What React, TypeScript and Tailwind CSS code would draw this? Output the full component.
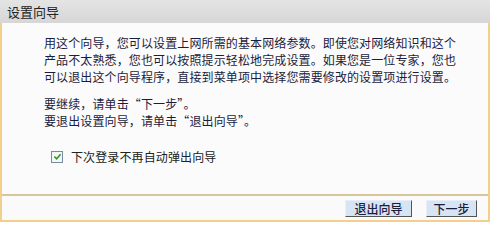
export default function App() {
  const font = { fontFamily: '"Noto Sans CJK SC", "Noto Sans", sans-serif' };
  return (
    <div className="w-[490px] h-[222px] flex flex-col bg-[#fbfbfb] text-[12px] leading-[17px] text-[#1c1c3c]" style={font}>
      <div className="h-[23px] shrink-0 bg-gradient-to-b from-[#e4e4e4] to-[#d6d6d6] pl-[7px] pt-[3px] text-[13px] leading-[17px] text-[#222]">
        设置向导
      </div>
      <div className="flex-1 flex flex-col border-l-2 border-r-2 border-[#f3cf8c]">
        <div className="flex-1 pl-[42px] pt-[11px] tracking-[0.12px]">
          <p>
            用这个向导，您可以设置上网所需的基本网络参数。即使您对网络知识和这个<br />
            产品不太熟悉，您也可以按照提示轻松地完成设置。如果您是一位专家，您也<br />
            可以退出这个向导程序，直接到菜单项中选择您需要修改的设置项进行设置。
          </p>
          <p className="mt-[10px]">
            要继续，请单击“下一步”。<br />
            要退出设置向导，请单击“退出向导”。
          </p>
          <label className="mt-[19px] flex items-center gap-[8px] pl-[7px]">
            <span className="w-[12px] h-[12px] border border-[#7a8aa0] bg-[#f4f7f2] flex items-center justify-center">
              <svg viewBox="0 0 10 10" className="w-[9px] h-[9px]">
                <path d="M1.5 5 L4 7.5 L8.5 2.5" fill="none" stroke="#2a9a2a" strokeWidth="1.8" />
              </svg>
            </span>
            <span className="text-[#222]">下次登录不再自动弹出向导</span>
          </label>
        </div>
        <div className="h-[2px] bg-[#d9c59c]" />
        <div className="h-[26px] shrink-0 flex items-center justify-end gap-[14px] pr-[11px] border-b-2 border-[#f3cf8c] bg-[#fafafa]">
          <button className="h-[17px] w-[67px] bg-[#d7e4f3] border border-t-[#e8eef8] border-l-[#e8eef8] border-r-[#555] border-b-[#555] text-[12px] leading-[15px] font-medium text-[#1c1c3c]">
            退出向导
          </button>
          <button className="h-[17px] w-[51px] bg-[#d7e4f3] border border-t-[#e8eef8] border-l-[#e8eef8] border-r-[#555] border-b-[#555] text-[12px] leading-[15px] font-medium text-[#1c1c3c]">
            下一步
          </button>
        </div>
      </div>
    </div>
  );
}
